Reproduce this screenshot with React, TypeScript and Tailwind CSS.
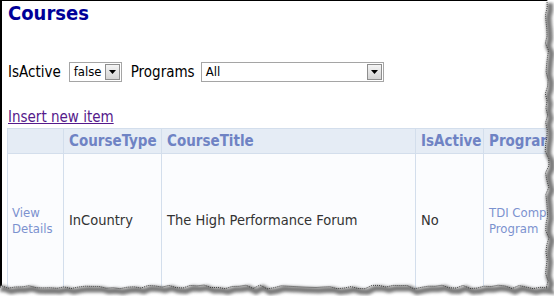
import React from "react";

function jag(seed: number, n: number) {
  const out: number[] = [];
  let s = seed;
  for (let i = 0; i < n; i++) {
    s = (s * 9301 + 49297) % 233280;
    out.push(s / 233280);
  }
  return out;
}

function TornEdges() {
  const r = jag(7, 80);
  const b = jag(13, 120);
  const rightPts: [number, number][] = [];
  for (let i = 0; i <= 40; i++) {
    const y = i * 7.2;
    const x = 545 + r[i] * 4;
    rightPts.push([x, Math.min(y, 287)]);
  }
  const bottomPts: [number, number][] = [];
  for (let i = 0; i <= 80; i++) {
    const x = 547 - i * 7;
    const y = 286 + b[i] * 4 - 1;
    bottomPts.push([Math.max(x, 0), y]);
  }
  const edge = [...rightPts, ...bottomPts];
  const d = "M" + edge.map((p) => `${p[0].toFixed(1)},${p[1].toFixed(1)}`).join(" L");
  const outside = d + " L0,296 L554,296 L554,0 Z";
  return (
    <svg className="absolute inset-0 pointer-events-none" width="554" height="296" viewBox="0 0 554 296">
      <defs>
        <filter id="blur" x="-10%" y="-10%" width="120%" height="120%">
          <feGaussianBlur stdDeviation="1.4" />
        </filter>
      </defs>
      <path d={outside} fill="#ffffff" />
      <g filter="url(#blur)" transform="translate(3,3)">
        <path d={d} fill="none" stroke="#7a7a7a" strokeWidth="6" />
      </g>
      <path d={outside} fill="none" />
      <path d={d} fill="none" stroke="#222" strokeWidth="0.8" strokeDasharray="1 1" />
    </svg>
  );
}

function FakeSelect({ value, width }: { value: string; width: string }) {
  return (
    <div className={`flex h-[20px] ${width} items-stretch border border-[#a5a5a5] bg-white`}>
      <div className="flex-1 pl-[4px] text-[13px] leading-[18px] text-black">{value}</div>
      <div className="m-[1px] flex w-[15px] items-center justify-center border border-[#8e8e8e] bg-gradient-to-b from-[#f4f4f4] to-[#d4d4d4]">
        <svg width="7" height="4" viewBox="0 0 7 4">
          <path d="M0,0 L7,0 L3.5,4 Z" fill="#000" />
        </svg>
      </div>
    </div>
  );
}

export default function App() {
  const font = { fontFamily: '"DejaVu Sans Condensed", "DejaVu Sans", sans-serif' };
  return (
    <div className="relative h-[296px] w-[554px] overflow-hidden bg-white" style={font}>
      <div className="h-full w-full border-l-[2px] border-t border-black">
        <div className="pl-[6px] text-[20px] font-bold leading-[24px] text-[#000099]">Courses</div>
        <div className="mt-[37px] flex items-center pl-[6px] text-[15px] text-black">
          <span className="leading-[20px]">IsActive</span>
          <div className="ml-[8px]">
            <FakeSelect value="false" width="w-[53px]" />
          </div>
          <span className="ml-[9px] leading-[20px]">Programs</span>
          <div className="ml-[6px]">
            <FakeSelect value="All" width="w-[183px]" />
          </div>
        </div>
        <div className="mt-[27px] pl-[6px] text-[15px] leading-[16px] text-[#551a8b] underline">Insert new item</div>
        <div className="ml-[5px] mt-[3px] flex w-[600px] flex-col">
          <div className="flex h-[26px] border-y border-[#d3deec] bg-[#e5ecf5] text-[15px] font-bold text-[#6f83c4]">
            <div className="w-[57px] border-x border-[#d3deec]"></div>
            <div className="flex w-[98px] items-center border-r border-[#d3deec] pl-[5px]">CourseType</div>
            <div className="flex w-[254px] items-center border-r border-[#d3deec] pl-[5px]">CourseTitle</div>
            <div className="flex w-[68px] items-center border-r border-[#d3deec] pl-[5px]">IsActive</div>
            <div className="flex w-[120px] items-center pl-[5px]">Programs</div>
          </div>
          <div className="flex h-[140px] bg-[#fbfcfe] text-[14.5px] text-[#333333]">
            <div className="flex w-[57px] items-center border-x border-[#d3deec] pb-[7px] pl-[4px] text-[13px] leading-[16px] text-[#7b92cf]">
              <div>
                View
                <br />
                Details
              </div>
            </div>
            <div className="flex w-[98px] items-center border-r border-[#d3deec] pb-[7px] pl-[5px]">InCountry</div>
            <div className="flex w-[254px] items-center border-r border-[#d3deec] pb-[7px] pl-[5px]">The High Performance Forum</div>
            <div className="flex w-[68px] items-center border-r border-[#d3deec] pb-[7px] pl-[5px]">No</div>
            <div className="flex w-[120px] items-center pb-[7px] pl-[5px] text-[13px] leading-[16px] text-[#7b92cf]">
              <div>
                TDI Competency
                <br />
                Program
              </div>
            </div>
          </div>
        </div>
      </div>
      <TornEdges />
    </div>
  );
}
